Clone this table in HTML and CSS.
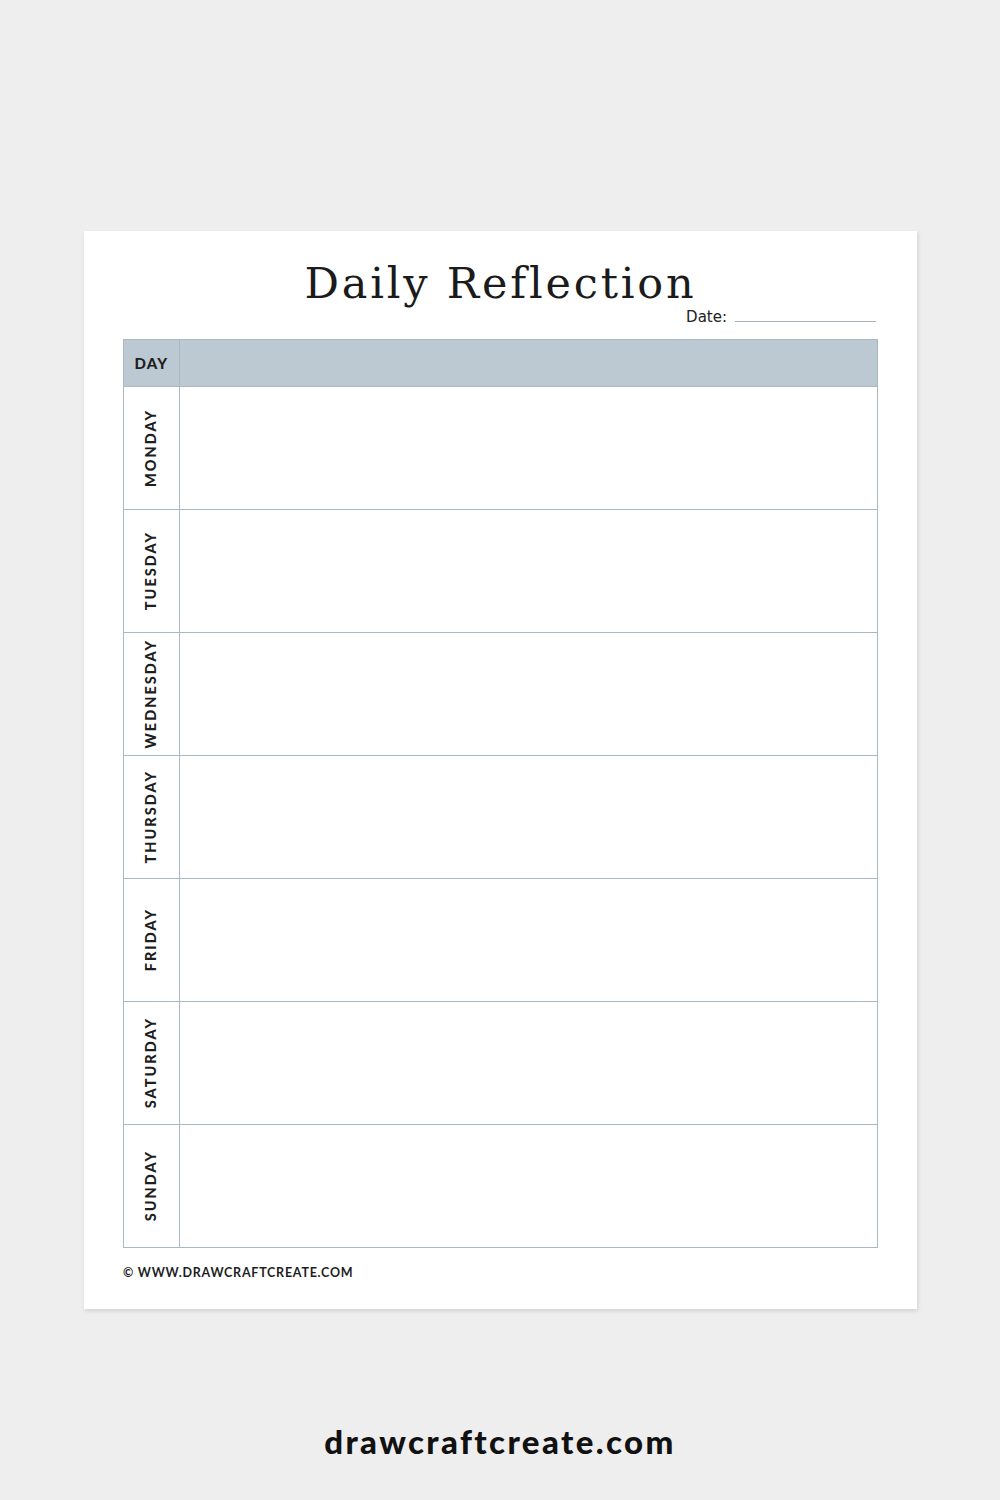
FILE: index.html
```html
<!DOCTYPE html>
<html>
<head>
<meta charset="utf-8">
<link rel="stylesheet" href="styles.css">
</head>
<body>
<div class="sheet">
  <div class="title-wrap">
    <h1 class="title">Daily Reflection</h1>
    <div class="date"><span>Date:</span><span class="date-line"></span></div>
  </div>
  <div class="table">
    <div class="row head"><div class="day-cell">DAY</div><div class="content-cell"></div></div>
    <div class="row"><div class="day-cell"><span class="vlabel">MONDAY</span></div><div class="content-cell"></div></div>
    <div class="row"><div class="day-cell"><span class="vlabel">TUESDAY</span></div><div class="content-cell"></div></div>
    <div class="row"><div class="day-cell"><span class="vlabel">WEDNESDAY</span></div><div class="content-cell"></div></div>
    <div class="row"><div class="day-cell"><span class="vlabel">THURSDAY</span></div><div class="content-cell"></div></div>
    <div class="row"><div class="day-cell"><span class="vlabel">FRIDAY</span></div><div class="content-cell"></div></div>
    <div class="row"><div class="day-cell"><span class="vlabel">SATURDAY</span></div><div class="content-cell"></div></div>
    <div class="row"><div class="day-cell"><span class="vlabel">SUNDAY</span></div><div class="content-cell"></div></div>
  </div>
  <div class="copyright">© WWW.DRAWCRAFTCREATE.COM</div>
</div>
<div class="brand">drawcraftcreate.com</div>
</body>
</html>
```
FILE: styles.css
```css
html, body {
  margin: 0;
  padding: 0;
  background: #eeeeee;
}
body {
  width: 1000px;
  height: 1500px;
  padding-top: 231px;
  box-sizing: border-box;
  font-family: "Lato", "Liberation Sans", sans-serif;
  color: #1a1a1a;
}
.sheet {
  margin-left: 84px;
  width: 833px;
  height: 1078px;
  background: #ffffff;
  box-sizing: border-box;
  padding: 0 39px;
  box-shadow: 1px 2px 4px rgba(0,0,0,0.12);
}
.title-wrap {
  height: 108px;
  position: relative;
}
.title {
  margin: 0;
  padding-top: 26px;
  text-align: center;
  font-family: "DejaVu Serif", "Liberation Serif", serif;
  font-weight: normal;
  font-size: 43px;
  line-height: 52px;
  letter-spacing: 2.8px;
  color: #1b1b1b;
}
.date {
  position: absolute;
  right: 2px;
  top: 77px;
  display: flex;
  align-items: flex-end;
  gap: 8px;
  font-family: "DejaVu Sans", "Liberation Sans", sans-serif;
  font-size: 15px;
  line-height: 18px;
  color: #222;
}
.date-line {
  width: 141px;
  height: 0;
  border-bottom: 1px solid #a7b0b6;
  margin-bottom: 4px;
}
.table {
  border: 1px solid #aab9c1;
  display: flex;
  flex-direction: column;
}
.row {
  display: flex;
  height: 123px;
  border-top: 1px solid #aab9c1;
  box-sizing: border-box;
}
.row.head {
  height: 46px;
  border-top: none;
  background: #bdc9d2;
}
.day-cell {
  width: 56px;
  border-right: 1px solid #aab9c1;
  box-sizing: border-box;
  display: flex;
  align-items: center;
  justify-content: center;
  font-weight: 900;
  font-size: 15px;
  letter-spacing: 1.2px;
  color: #1e1e1e;
}
.content-cell {
  flex: 1;
}
.vlabel {
  writing-mode: vertical-rl;
  transform: rotate(180deg);
  margin-right: 3px;
  font-weight: 900;
  font-size: 14.5px;
  letter-spacing: 2px;
  color: #1e1e1e;
}
.copyright {
  margin-top: 17px;
  font-size: 12.5px;
  font-weight: 700;
  letter-spacing: 0.75px;
  color: #1e1e1e;
}
.brand {
  margin-top: 112px;
  text-align: center;
  font-family: "Lato", "Liberation Sans", sans-serif;
  font-weight: 900;
  font-size: 33px;
  letter-spacing: 2.4px;
  color: #111;
}
```
